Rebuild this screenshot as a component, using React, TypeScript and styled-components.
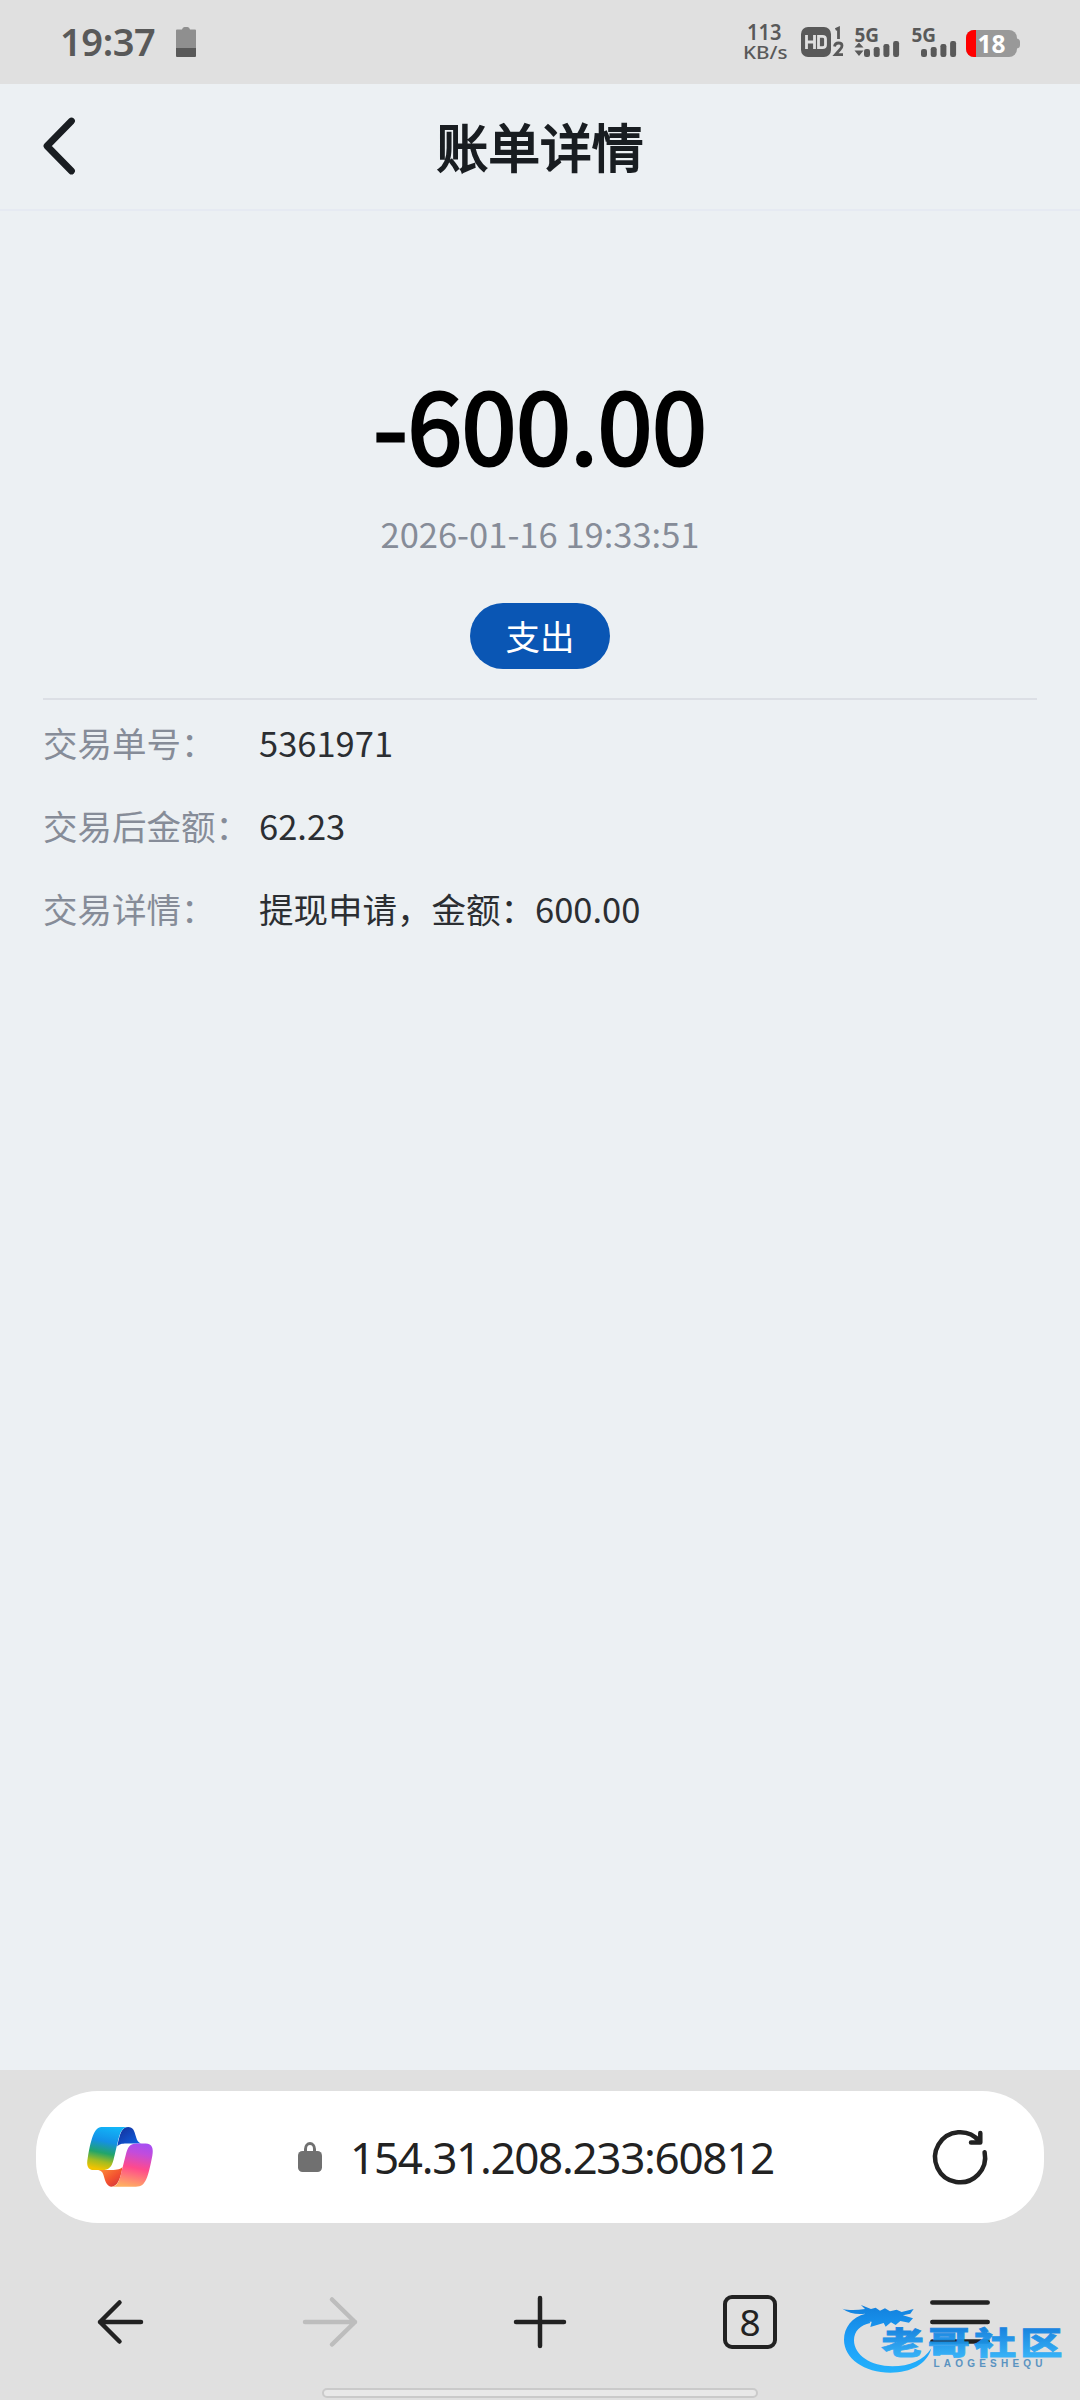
import React from 'react';
import styled, { createGlobalStyle } from 'styled-components';

const GlobalStyle = createGlobalStyle`
  * {
    box-sizing: border-box;
  }
  body {
    margin: 0;
    background: #ecf0f3;
    font-family: 'Noto Sans CJK SC', sans-serif;
  }
  svg {
    display: block;
    flex: none;
    overflow: visible;
  }
`;

const Screen = styled.div`
  position: relative;
  display: flex;
  flex-direction: column;
  width: 1080px;
  height: 2400px;
  overflow: hidden;
  background: #ecf0f3;
`;

const StatusBar = styled.div`
  display: flex;
  justify-content: space-between;
  height: 84px;
  padding: 0 57px 0 60px;
  background: #e0e0e0;
  color: #595959;
`;

const StatusGroup = styled.div`
  display: flex;
  align-items: center;
`;

const Clock = styled.span`
  width: 116px;
  padding-bottom: 2px;
  font: 600 38px/82px 'Noto Sans', sans-serif;
  letter-spacing: -0.4px;
`;

const Header = styled.header`
  display: grid;
  grid-template-columns: 120px 1fr 120px;
  align-items: center;
  height: 127px;
  border-bottom: 2px solid #e6eaf2;
`;

const BackButton = styled.button`
  height: 125px;
  padding: 0 0 2px 40px;
  border: 0;
  background: none;
`;

const Title = styled.h1`
  margin: 0;
  padding-bottom: 2px;
  text-align: center;
  font-size: 51.8px;
  font-weight: 400;
  line-height: 123px;
  color: #191d21;
  -webkit-text-stroke: 1.8px #191d21;
`;

const Content = styled.main`
  flex: 1;
  padding: 151px 43px 0;
`;

const Summary = styled.section`
  display: flex;
  flex-direction: column;
  align-items: center;
  height: 338px;
  border-bottom: 2px solid #dcdfe5;
`;

const Amount = styled.div`
  font-size: 98px;
  font-weight: 400;
  line-height: 120px;
  color: #000;
  -webkit-text-stroke: 3.2px #000;
`;

const DateText = styled.div`
  margin-top: 26px;
  font-size: 34.5px;
  line-height: 50px;
  color: #868c98;
`;

const Tag = styled.span`
  margin-top: 45px;
  width: 140px;
  height: 66px;
  border-radius: 33px;
  background: #0a56b4;
  text-align: center;
  font-size: 34.5px;
  line-height: 64px;
  color: #fff;
`;

const Row = styled.div`
  display: flex;
  height: 83px;
  font-size: 34.5px;
  line-height: 85px;
`;

const RowLabel = styled.span`
  width: 216px;
  white-space: nowrap;
  color: #868c98;
`;

const RowValue = styled.span`
  color: #2b2e32;
`;

const BrowserBar = styled.footer`
  height: 330px;
  padding-top: 21px;
  background: #e0e0e0;
`;

const AddressBar = styled.div`
  display: flex;
  align-items: center;
  justify-content: space-between;
  height: 132px;
  margin: 0 36px;
  padding: 0 56px 0 51px;
  border-radius: 62px;
  background: #fff;
`;

const Address = styled.div`
  display: flex;
  align-items: center;
  gap: 28px;
  margin-right: 13px;
  font: 400 44px/60px 'Noto Sans', sans-serif;
  letter-spacing: -1.3px;
  color: #222;
`;

const NavBar = styled.nav`
  display: grid;
  grid-template-columns: repeat(5, 210px);
  justify-content: center;
  align-items: center;
  justify-items: center;
  height: 165px;
  padding-top: 32px;
`;

const TabCount = styled.span`
  width: 54px;
  height: 54px;
  border: 4.5px solid #222;
  border-radius: 9px;
  text-align: center;
  font: 400 37px/45px 'Noto Sans', sans-serif;
  color: #222;
`;

const HomeIndicator = styled.div`
  width: 436px;
  height: 10px;
  margin: 0 auto;
  border: 2px solid #cacaca;
  border-radius: 5px;
  background: #e8e8e8;
`;

const Watermark = styled.svg`
  position: absolute;
  left: 830px;
  top: 2290px;
`;

const BAR_HEIGHTS = [8, 10, 13, 16];

interface SignalProps {
  active?: boolean;
}

const Signal: React.FC<SignalProps> = ({ active }: SignalProps) => (
  <svg width="57" height="36" viewBox="0 0 57 36" fill="#595959">
    <text x="-0.5" y="17.5" fontFamily="Noto Sans" fontSize="19" fontWeight="700" textLength="24.5" lengthAdjust="spacingAndGlyphs">
      5G
    </text>
    {active && <path d="M-0.5 23.5L4 18.5L8.5 23.5ZM-0.5 26.5L4 32L8.5 26.5Z" />}
    {BAR_HEIGHTS.map((h, i) => (
      <rect key={h} x={9 + i * 9.7} y={33 - h} width="6" height={h} rx="2.2" />
    ))}
  </svg>
);

const StatusIcons: React.FC = () => (
  <StatusGroup>
    <svg width="57" height="44" viewBox="0 0 57 44" fill="#595959" fontFamily="Noto Sans">
      <text x="3" y="20" fontSize="22" fontWeight="600" textLength="34.5" lengthAdjust="spacingAndGlyphs">
        113
      </text>
      <text x="-1" y="39" fontSize="18.5" fontWeight="500" textLength="44.5" lengthAdjust="spacingAndGlyphs">
        KB/s
      </text>
    </svg>
    <svg width="54" height="36" viewBox="0 0 54 36">
      <rect x="0" y="3" width="30" height="30" rx="7" fill="#595959" />
      <path
        d="M5.5 11V25M13.5 11V25M5.5 18H13.5M17.5 12.3H21.5Q24.5 12.3 24.5 15V21Q24.5 23.7 21.5 23.7H17.5Z"
        fill="none"
        stroke="#e0e0e0"
        strokeWidth="2.8"
      />
      <path d="M34.5 5.5L37.5 4.2V15" fill="none" stroke="#595959" strokeWidth="2.8" />
      <path d="M33.5 22.5Q34 19 37.5 19Q41 19 41 21.8Q41 23.5 39 25.5L34.5 30.6H42" fill="none" stroke="#595959" strokeWidth="2.8" />
    </svg>
    <Signal active />
    <Signal />
    <svg width="54" height="36" viewBox="0 0 54 36">
      <clipPath id="battery">
        <rect x="-3" y="6" width="51" height="27" rx="8" />
      </clipPath>
      <rect x="-3" y="6" width="51" height="27" rx="8" fill="#999" />
      <path d="M48 14.5Q51 15 51 18V21Q51 24 48 24.5Z" fill="#999" />
      <rect x="-3" y="6" width="10" height="27" fill="#f00" clipPath="url(#battery)" />
      <text x="8.5" y="28.5" fill="#fff" fontFamily="Noto Sans" fontSize="25" fontWeight="700" textLength="28" lengthAdjust="spacingAndGlyphs">
        18
      </text>
    </svg>
  </StatusGroup>
);

const CopilotLogo: React.FC = () => (
  <svg width="66" height="60" viewBox="261 231 199 181">
    <defs>
      <linearGradient id="left" x1="0.6" y1="0" x2="0.4" y2="1">
        <stop offset="0" stopColor="#12b5f8" />
        <stop offset="0.35" stopColor="#1490e6" />
        <stop offset="0.62" stopColor="#22a56a" />
        <stop offset="0.82" stopColor="#a5bd20" />
        <stop offset="1" stopColor="#f2c300" />
      </linearGradient>
      <linearGradient id="blue" x1="0" y1="0" x2="1" y2="1">
        <stop offset="0.2" stopColor="#1339a8" />
        <stop offset="1" stopColor="#0f6bee" />
      </linearGradient>
      <linearGradient id="right" x1="0.6" y1="0" x2="0.4" y2="1">
        <stop offset="0" stopColor="#a94df0" />
        <stop offset="0.2" stopColor="#c24cdc" />
        <stop offset="0.55" stopColor="#ff4a8c" />
        <stop offset="1" stopColor="#ffae62" />
      </linearGradient>
      <linearGradient id="fold" x1="0" y1="0" x2="1" y2="1">
        <stop offset="0" stopColor="#ff9a3a" />
        <stop offset="0.6" stopColor="#f25030" />
        <stop offset="1" stopColor="#cc3040" />
      </linearGradient>
    </defs>
    <path d="M352 290C360 250 366 231 385 231C400 231 404 243 408 258C412 274 418 281 430 281H385C370 281 360 281 352 290Z" fill="url(#blue)" />
    <path d="M368 352C362 390 352 411 335 411C322 411 316 395 312 380C309 368 304 361 290 361H330C345 361 360 361 368 352Z" fill="url(#fold)" />
    <path d="M309 231H385C366 231 360 250 354 275L341 330C335 352 328 361 306 361H283C262 361 259 345 263 325C268 292 275 265 281 252C288 236 296 231 309 231Z" fill="url(#left)" />
    <path d="M411 281H438C458 281 462 297 458 318C452 350 446 375 440 388C432 405 425 411 408 411H335C352 411 358 395 364 370L378 315C384 292 390 281 411 281Z" fill="url(#right)" />
  </svg>
);

const LaogeMark: React.FC = () => (
  <Watermark width="240" height="90" viewBox="0 0 240 90">
    <defs>
      <linearGradient id="mark" gradientUnits="userSpaceOnUse" x1="0" y1="30" x2="0" y2="235">
        <stop offset="0" stopColor="#1280dc" />
        <stop offset="0.5" stopColor="#1c9ef8" />
        <stop offset="1" stopColor="#24b2fc" />
      </linearGradient>
      <linearGradient id="markText" x1="0" y1="0" x2="0" y2="1">
        <stop offset="0.25" stopColor="#0c7ee0" />
        <stop offset="0.85" stopColor="#2aaef8" />
      </linearGradient>
    </defs>
    <g transform="translate(5 5) scale(0.3333)" fill="url(#mark)">
      <path d="M92 56C50 66 27 98 27 134C27 190 88 233 166 233C228 233 276 208 289 160C266 197 224 214 172 214C108 214 57 180 57 136C57 108 76 90 106 84Z" />
      <path d="M22 41C40 47 66 46 90 42L78 30L108 42L122 38L135 47L150 40L165 49L185 44L200 51L236 42L226 56L204 61L234 70L222 83L196 78L182 90L168 82L152 95L146 84L126 90L106 96L110 80L92 80L90 56C66 60 40 54 22 41Z" />
    </g>
    <text
      transform="translate(51.5 63.5) scale(1.36 1)"
      fill="url(#markText)"
      stroke="url(#markText)"
      strokeWidth="0.8"
      fontFamily="Noto Sans CJK SC"
      fontSize="31"
      fontWeight="900"
      letterSpacing="3"
      opacity="0.93"
    >
      老哥社区
    </text>
    <text x="103.5" y="76.5" fill="#5a93c0" fontFamily="Liberation Sans" fontSize="10" fontWeight="700" textLength="109">
      LAOGESHEQU
    </text>
  </Watermark>
);

const ROWS = [
  { label: '交易单号：', value: '5361971' },
  { label: '交易后金额：', value: '62.23' },
  { label: '交易详情：', value: '提现申请，金额：600.00' }
];

const App: React.FC = () => (
  <>
    <GlobalStyle />
    <Screen lang="zh-CN">
      <StatusBar>
        <StatusGroup>
          <Clock>19:37</Clock>
          <svg width="20" height="30" viewBox="0 0 20 30">
            <path d="M0 3.5Q0 2.5 1 2.5H6Q6.5 0 8.5 0H11.5Q13.5 0 14 2.5H19Q20 2.5 20 3.5V21H0Z" fill="#8f8f8f" />
            <path d="M0 21H20V29Q20 30 19 30H1Q0 30 0 29Z" fill="#595959" />
          </svg>
        </StatusGroup>
        <StatusIcons />
      </StatusBar>

      <Header>
        <BackButton>
          <svg width="36" height="58" viewBox="0 0 36 58" fill="none" stroke="#191d21" strokeWidth="6.8" strokeLinecap="round" strokeLinejoin="round">
            <path d="M31.5 4L7 29L31.5 54" />
          </svg>
        </BackButton>
        <Title>账单详情</Title>
      </Header>

      <Content>
        <Summary>
          <Amount>-600.00</Amount>
          <DateText>2026-01-16 19:33:51</DateText>
          <Tag>支出</Tag>
        </Summary>
        {ROWS.map(row => (
          <Row key={row.label}>
            <RowLabel>{row.label}</RowLabel>
            <RowValue>{row.value}</RowValue>
          </Row>
        ))}
      </Content>

      <BrowserBar>
        <AddressBar>
          <CopilotLogo />
          <Address>
            <svg width="24" height="30" viewBox="0 0 24 30">
              <path d="M7.5 12V7A4.5 5.5 0 0 1 16.5 7V12" fill="none" stroke="#707070" strokeWidth="3" />
              <rect y="9" width="24" height="21" rx="4.5" fill="#707070" />
            </svg>
            154.31.208.233:60812
          </Address>
          <svg width="56" height="56" viewBox="0 0 56 56" fill="none" stroke="#222" strokeWidth="4.5" strokeLinecap="round" strokeLinejoin="round">
            <path d="M52.6 23.3A25 25 0 1 1 47.5 12.5" />
            <path d="M48.3 4V13.5H39" />
          </svg>
        </AddressBar>
        <NavBar>
          <svg width="48" height="48" viewBox="0 0 48 48" fill="none" stroke="#222" strokeWidth="4.5" strokeLinecap="round" strokeLinejoin="round">
            <path d="M45 24H4M23.5 4.5L4 24L23.5 43.5" />
          </svg>
          <svg width="56" height="50" viewBox="0 0 56 50" fill="none" stroke="#bdbdbd" strokeWidth="4.5" strokeLinecap="round" strokeLinejoin="round">
            <path d="M3 25H53M30 2.5L53 25L30 47.5" />
          </svg>
          <svg width="54" height="54" viewBox="0 0 54 54" stroke="#222" strokeWidth="4.5" strokeLinecap="round">
            <path d="M27 3V51M3 27H51" />
          </svg>
          <TabCount>8</TabCount>
          <svg width="60" height="44" viewBox="0 0 60 44" stroke="#222" strokeWidth="4.5" strokeLinecap="round">
            <path d="M2.3 2.5H57.7M2.3 22H57.7M2.3 41.5H57.7" />
          </svg>
        </NavBar>
        <HomeIndicator />
      </BrowserBar>
      <LaogeMark />
    </Screen>
  </>
);

export default App;
